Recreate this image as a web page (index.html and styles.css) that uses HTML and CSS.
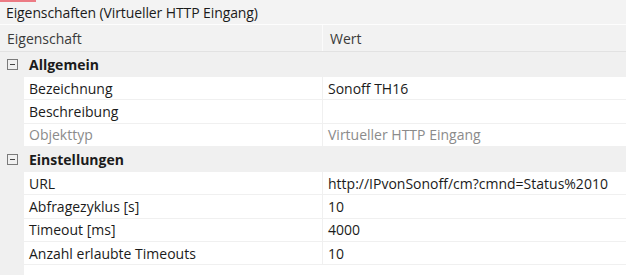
FILE: index.html
```html
<!DOCTYPE html>
<html lang="de">
<head>
    <meta charset="UTF-8">
    <title>Eigenschaften</title>
    <link rel="stylesheet" href="styles.css">
</head>
<body>

    <div class="panel">
        <div class="title">Eigenschaften (Virtueller HTTP Eingang)</div>

        <div class="head">
            <div class="head-cell">Eigenschaft</div>
            <div class="head-cell head-value">Wert</div>
        </div>

        <div class="group">
            <span class="toggle"></span>
            <span>Allgemein</span>
        </div>
        <div class="row">
            <div class="name">Bezeichnung</div>
            <div class="value">Sonoff TH16</div>
        </div>
        <div class="row">
            <div class="name">Beschreibung</div>
            <div class="value"></div>
        </div>
        <div class="row readonly">
            <div class="name">Objekttyp</div>
            <div class="value">Virtueller HTTP Eingang</div>
        </div>

        <div class="group">
            <span class="toggle"></span>
            <span>Einstellungen</span>
        </div>
        <div class="row">
            <div class="name">URL</div>
            <div class="value">http://IPvonSonoff/cm?cmnd=Status%2010</div>
        </div>
        <div class="row">
            <div class="name">Abfragezyklus [s]</div>
            <div class="value">10</div>
        </div>
        <div class="row">
            <div class="name">Timeout [ms]</div>
            <div class="value">4000</div>
        </div>
        <div class="row">
            <div class="name">Anzahl erlaubte Timeouts</div>
            <div class="value">10</div>
        </div>
        <div class="rest"></div>
    </div>

</body>
</html>
```

FILE: styles.css
```css
body {
    margin: 0;
    font-family: "Open Sans", "Noto Sans", sans-serif;
    font-size: 14px;
    color: #1b1b1b;
    background: #fff;
    overflow: hidden;
}

.panel {
    width: 626px;
    height: 275px;
    display: flex;
    flex-direction: column;
}

/* Titelleiste */
.title {
    height: 25px;
    box-sizing: border-box;
    display: flex;
    align-items: center;
    padding-left: 6px;
    background: #f3f3f3;
    border-bottom: 1px solid #fdfdfd;
    position: relative;
    letter-spacing: -0.1px;
}

.title::before {
    content: "";
    position: absolute;
    left: 0;
    top: 0;
    width: 36px;
    height: 2px;
    background: #ec7b84;
}

.head {
    height: 27px;
    display: grid;
    grid-template-columns: 322px 1fr;
    background: #f2f2f2;
    border-bottom: 1px solid #e2e2e2;
    box-sizing: border-box;
    color: #3a3a3a;
}

.head-cell {
    display: flex;
    align-items: center;
    padding-left: 7px;
}

.head-value {
    border-left: 1px solid #fbfbfb;
}

/* Gruppen */
.group {
    height: 25px;
    display: flex;
    align-items: center;
    gap: 11px;
    padding-left: 7px;
    background: #f0f0f0;
    font-weight: bold;
}

.toggle {
    width: 9px;
    height: 9px;
    border: 1px solid #7a7a7a;
    position: relative;
}

.toggle::after {
    content: "";
    position: absolute;
    left: 2px;
    top: 4px;
    width: 5px;
    height: 1px;
    background: #444;
}

.row {
    height: 23.33px;
    display: grid;
    grid-template-columns: 24px 298px 1fr;
    background: #f0f0f0;
}

.name,
.value {
    background: #fff;
    margin-bottom: 1px;
    display: flex;
    align-items: center;
    white-space: nowrap;
}

.name {
    grid-column: 2;
    padding-left: 5px;
}

.value {
    margin-left: 1px;
    padding-left: 5px;
}

.readonly {
    color: #8b8b8b;
}

.rest {
    flex: 1;
    background: #fff;
    border-left: 24px solid #f0f0f0;
}
```
